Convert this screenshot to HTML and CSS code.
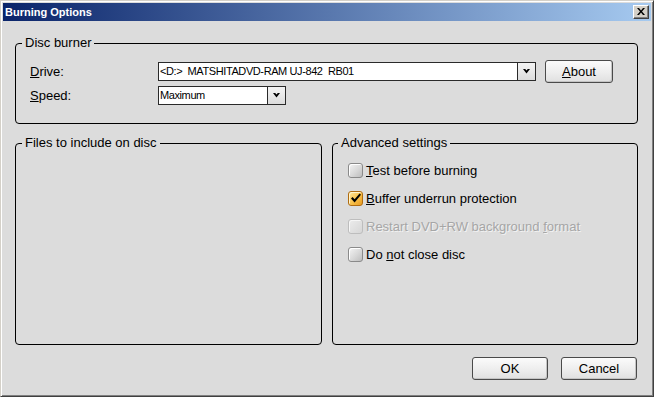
FILE: index.html
```html
<!DOCTYPE html>
<html>
<head>
<meta charset="utf-8">
<title>Burning Options</title>
<link rel="stylesheet" href="styles.css">
</head>
<body>
<div class="window">
  <div class="titlebar">
    <span class="title">Burning Options</span>
    <span class="close-btn"><svg width="8" height="7" viewBox="0 0 8 7"><path d="M0 0h2l2 2.5L6 0h2L5 3.5 8 7H6L4 4.5 2 7H0l3-3.5z" fill="#000"/></svg></span>
  </div>
  <div class="client">
    <div class="group burner">
      <span class="legend">Disc burner</span>
      <div class="form-grid">
        <span class="field-label"><u>D</u>rive:</span>
        <div class="drive-row">
          <div class="combo combo-wide">
            <span class="combo-value">&lt;D:&gt;  MATSHITADVD-RAM UJ-842  RB01</span>
            <span class="combo-arrow"><svg width="7" height="5" viewBox="0 0 7 5"><path d="M0 0h2.2l1.3 1.5L4.8 0H7L3.5 4.5z" fill="#000"/></svg></span>
          </div>
          <span class="btn btn-about"><u>A</u>bout</span>
        </div>
        <span class="field-label"><u>S</u>peed:</span>
        <div class="combo combo-narrow">
          <span class="combo-value">Maximum</span>
          <span class="combo-arrow"><svg width="7" height="5" viewBox="0 0 7 5"><path d="M0 0h2.2l1.3 1.5L4.8 0H7L3.5 4.5z" fill="#000"/></svg></span>
        </div>
      </div>
    </div>
    <div class="panels">
      <div class="group files">
        <span class="legend">Files to include on disc</span>
      </div>
      <div class="group advanced">
        <span class="legend">Advanced settings</span>
        <ul class="checks">
          <li class="check"><span class="box"></span><span><u>T</u>est before burning</span></li>
          <li class="check"><span class="box checked"><svg width="13" height="13" viewBox="0 0 13 13"><path d="M2 6.5l1.6-1.4 2 2.2L10.6 1.5 12 2.8 5.6 10.4z" fill="#000"/></svg></span><span><u>B</u>uffer underrun protection</span></li>
          <li class="check disabled"><span class="box"></span><span>Restart DVD+RW background <u>f</u>ormat</span></li>
          <li class="check"><span class="box"></span><span>Do <u>n</u>ot close disc</span></li>
        </ul>
      </div>
    </div>
    <div class="actions">
      <span class="btn btn-action">OK</span>
      <span class="btn btn-action">Cancel</span>
    </div>
  </div>
</div>
</body>
</html>
```
FILE: styles.css
```css
* { box-sizing: border-box; }
html, body { margin: 0; padding: 0; background: #dcdcdc; }
body { font-family: "Liberation Sans", Arial, sans-serif; font-size: 13px; color: #000; }

.window {
  width: 654px;
  height: 397px;
  background: #dcdcdc;
  border: 1px solid;
  border-color: #d4d0c8 #404040 #404040 #d4d0c8;
  box-shadow: inset 1px 1px 0 #ffffff, inset -1px -1px 0 #808080;
  padding: 2px;
  display: flex;
  flex-direction: column;
}

.titlebar {
  height: 18px;
  background: linear-gradient(to right, #0a246a, #a6caf0);
  display: flex;
  align-items: center;
  justify-content: space-between;
  padding: 0 2px 0 2px;
}
.title {
  color: #fff;
  font-weight: bold;
  font-size: 11px;
  line-height: 13px;
}
.close-btn {
  width: 16px;
  height: 14px;
  background: #d4d0c8;
  border: 1px solid;
  border-color: #ffffff #404040 #404040 #ffffff;
  box-shadow: inset -1px -1px 0 #808080;
  display: flex;
  align-items: center;
  justify-content: center;
  padding-bottom: 1px;
}

.client {
  flex: 1;
  padding: 22px 13px 0 12px;
  display: flex;
  flex-direction: column;
}

.group {
  position: relative;
  border: 1px solid #000;
  border-radius: 4px;
}
.legend {
  position: absolute;
  top: -9px;
  left: 6px;
  padding: 0 3px;
  background: #dcdcdc;
  line-height: 16px;
  white-space: nowrap;
}
.advanced .legend { left: 5px; }

.burner { height: 81px; }
.form-grid {
  display: grid;
  grid-template-columns: 128px auto;
  row-gap: 3px;
  align-items: center;
  padding: 16px 0 0 14px;
}
.field-label { line-height: 16px; }
.drive-row {
  display: flex;
  align-items: center;
  gap: 9px;
}

.combo {
  height: 19px;
  display: flex;
  border: 1px solid #2a2a2a;
  border-right: 0;
  background: #fff;
}
.combo-wide { width: 378px; }
.combo-narrow { width: 128px; }
.combo-value {
  flex: 1;
  font-size: 11px;
  letter-spacing: -0.4px;
  line-height: 17px;
  padding-left: 1px;
  white-space: pre;
  overflow: hidden;
}
.combo-arrow {
  width: 19px;
  height: 17px;
  background: linear-gradient(#f4f4f4, #dcdcdc);
  border-left: 1px solid #2a2a2a;
  border-right: 1px solid #2a2a2a;
  display: flex;
  align-items: center;
  justify-content: center;
}

.btn {
  display: flex;
  align-items: center;
  justify-content: center;
  height: 23px;
  border: 1px solid #4a4a4a;
  border-radius: 3px;
  background: linear-gradient(#fbfbfb, #ececec 60%, #e0e0e0);
  box-shadow: inset -1px -1px 0 #c4c4c4;
  line-height: 16px;
}
.btn-about { width: 68px; }
.btn-action { width: 76px; }

.panels {
  display: grid;
  grid-template-columns: 307px 306px;
  column-gap: 10px;
  margin-top: 19px;
  height: 202px;
}

.checks {
  list-style: none;
  margin: 0;
  padding: 19px 0 0 15px;
  display: flex;
  flex-direction: column;
  gap: 13px;
}
.check {
  display: flex;
  align-items: center;
  gap: 3px;
  height: 15px;
  line-height: 15px;
  white-space: nowrap;
}
.box {
  width: 15px;
  height: 15px;
  border: 1px solid #8a8a8a;
  border-radius: 3px;
  background: linear-gradient(135deg, #f4f4f4, #d8d8d8 55%, #bdbdbd);
  box-shadow: inset 1px 1px 0 #ffffff;
  display: flex;
  align-items: center;
  justify-content: center;
  flex: none;
}
.box.checked {
  border-color: #b06c10;
  background: linear-gradient(135deg, #ffe9a0, #f8bf48 55%, #e89a20);
  box-shadow: inset 1px 1px 0 #fff4cc;
}
.check.disabled { color: #a6a6a6; text-shadow: 1px 1px 0 #f2f2f2; }
.check.disabled .box {
  border-color: #bdbdbd;
  background: linear-gradient(135deg, #ececec, #d6d6d6);
  box-shadow: inset 1px 1px 0 #f6f6f6;
}

.actions {
  display: flex;
  justify-content: flex-end;
  gap: 13px;
  margin-top: 12px;
  padding-right: 1px;
}
```
